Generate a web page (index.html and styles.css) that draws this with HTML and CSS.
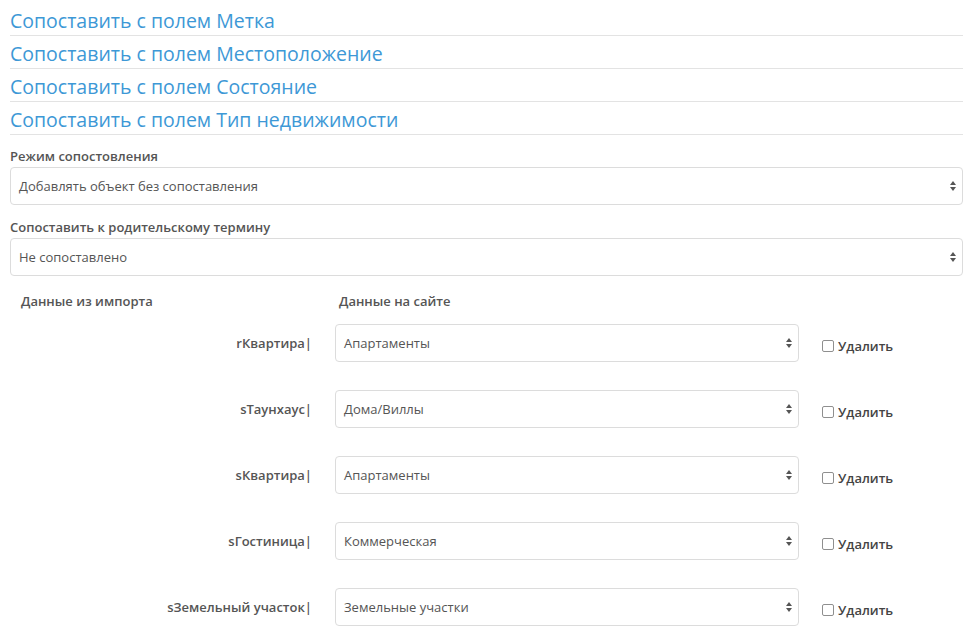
FILE: index.html
```html
<!DOCTYPE html>
<html lang="ru">
<head>
<meta charset="utf-8">
<title>Сопоставление</title>
<link rel="stylesheet" href="styles.css">
</head>
<body>
<div class="page">
  <h3 class="map-title">Сопоставить с полем Метка</h3>
  <h3 class="map-title">Сопоставить с полем Местоположение</h3>
  <h3 class="map-title">Сопоставить с полем Состояние</h3>
  <h3 class="map-title">Сопоставить с полем Тип недвижимости</h3>

  <div class="field">
    <div class="field-label">Режим сопостовления</div>
    <div class="select"><span>Добавлять объект без сопоставления</span><svg class="arrows" width="6" height="10" viewBox="0 0 6 10"><path d="M0 4 L3 0 L6 4 Z M0 6 L3 10 L6 6 Z"/></svg></div>
  </div>
  <div class="field field-second">
    <div class="field-label">Сопоставить к родительскому термину</div>
    <div class="select"><span>Не сопоставлено</span><svg class="arrows" width="6" height="10" viewBox="0 0 6 10"><path d="M0 4 L3 0 L6 4 Z M0 6 L3 10 L6 6 Z"/></svg></div>
  </div>

  <div class="map-table">
    <div class="map-head">
      <div class="col-src head-src">Данные из импорта</div>
      <div class="col-dst head-dst">Данные на сайте</div>
    </div>
    <div class="map-row">
      <div class="col-src src-name">rКвартира|</div>
      <div class="col-dst select"><span>Апартаменты</span><svg class="arrows" width="6" height="10" viewBox="0 0 6 10"><path d="M0 4 L3 0 L6 4 Z M0 6 L3 10 L6 6 Z"/></svg></div>
      <label class="del"><span class="box"></span>Удалить</label>
    </div>
    <div class="map-row">
      <div class="col-src src-name">sТаунхаус|</div>
      <div class="col-dst select"><span>Дома/Виллы</span><svg class="arrows" width="6" height="10" viewBox="0 0 6 10"><path d="M0 4 L3 0 L6 4 Z M0 6 L3 10 L6 6 Z"/></svg></div>
      <label class="del"><span class="box"></span>Удалить</label>
    </div>
    <div class="map-row">
      <div class="col-src src-name">sКвартира|</div>
      <div class="col-dst select"><span>Апартаменты</span><svg class="arrows" width="6" height="10" viewBox="0 0 6 10"><path d="M0 4 L3 0 L6 4 Z M0 6 L3 10 L6 6 Z"/></svg></div>
      <label class="del"><span class="box"></span>Удалить</label>
    </div>
    <div class="map-row">
      <div class="col-src src-name">sГостиница|</div>
      <div class="col-dst select"><span>Коммерческая</span><svg class="arrows" width="6" height="10" viewBox="0 0 6 10"><path d="M0 4 L3 0 L6 4 Z M0 6 L3 10 L6 6 Z"/></svg></div>
      <label class="del"><span class="box"></span>Удалить</label>
    </div>
    <div class="map-row">
      <div class="col-src src-name">sЗемельный участок|</div>
      <div class="col-dst select"><span>Земельные участки</span><svg class="arrows" width="6" height="10" viewBox="0 0 6 10"><path d="M0 4 L3 0 L6 4 Z M0 6 L3 10 L6 6 Z"/></svg></div>
      <label class="del"><span class="box"></span>Удалить</label>
    </div>
  </div>
</div>
</body>
</html>
```

FILE: styles.css
```css
* { box-sizing: border-box; }
html, body { margin: 0; padding: 0; background: #fff; }
body {
  font-family: "Open Sans", "Liberation Sans", sans-serif;
  color: #555;
  font-size: 13px;
}
.page {
  padding: 3px 8px 0 10px;
}
.map-title {
  margin: 0;
  font-size: 19.5px;
  font-weight: 400;
  line-height: 25px;
  padding: 5px 0 2px;
  color: #3d98d6;
  border-bottom: 1px solid #e3e3e3;
}
.field {
  margin-top: 12px;
}
.field-second {
  margin-top: 13px;
}
.field-label {
  font-weight: 600;
  line-height: 18px;
  margin-bottom: 2px;
  color: #555;
}
.select {
  height: 38px;
  border: 1px solid #dcdcdc;
  border-radius: 4px;
  display: flex;
  align-items: center;
  justify-content: space-between;
  padding: 0 6px 0 8px;
  color: #555;
  background: #fff;
}
.arrows { fill: #555; flex: none; }
.map-table {
  margin-top: 16px;
}
.map-head {
  display: flex;
  line-height: 18px;
  font-weight: 600;
}
.head-src { padding-left: 11px; }
.head-dst { padding-left: 4px; }
.col-src {
  width: 302px;
  flex: none;
}
.col-dst {
  width: 464px;
  flex: none;
  margin-left: 23px;
}
.map-row {
  display: flex;
  align-items: center;
  padding: 14px 0;
}
.src-name {
  text-align: right;
  font-weight: 600;
}
.map-row .select { padding-left: 8px; padding-right: 6px; }
.del {
  margin-left: 23px;
  display: flex;
  align-items: center;
  font-weight: 600;
  color: #444;
  margin-top: 5px;
}
.box {
  width: 12px;
  height: 12px;
  border: 1px solid #8f8f8f;
  border-radius: 2px;
  background: #fff;
  margin-right: 4px;
}
```
